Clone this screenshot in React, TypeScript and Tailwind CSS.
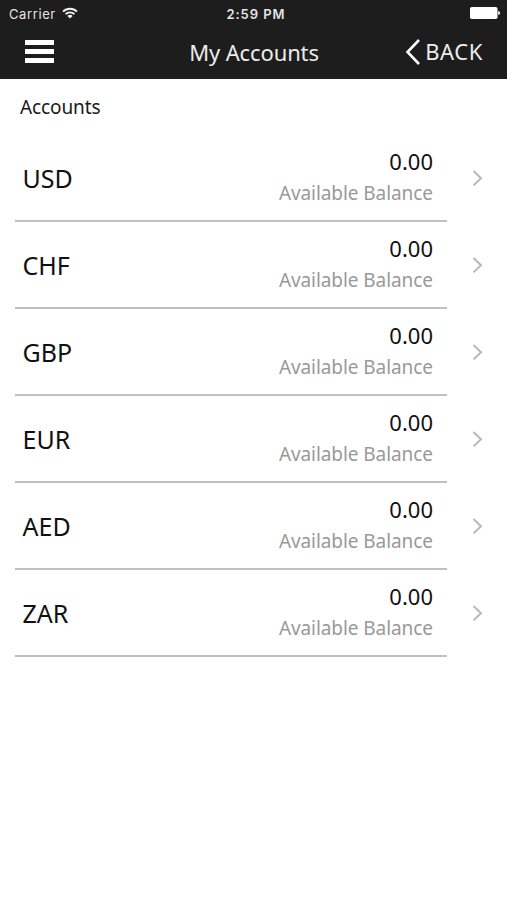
import React from "react";

const accounts = [
  { currency: "USD", balance: "0.00" },
  { currency: "CHF", balance: "0.00" },
  { currency: "GBP", balance: "0.00" },
  { currency: "EUR", balance: "0.00" },
  { currency: "AED", balance: "0.00" },
  { currency: "ZAR", balance: "0.00" },
];

const StatusBar = () => (
  <div className="grid h-[27px] grid-cols-[1fr_auto_1fr] items-center pl-[9px] pr-[7px] font-['Inter',sans-serif] text-[13px] leading-[26px] text-[#e4e4e4]">
    <div className="flex items-center gap-[6px]">
      <span className="tracking-[0.6px]">Carrier</span>
      <svg className="-mt-0.5" width="16" height="12" viewBox="0 0 16 12" fill="none" stroke="#f2f2f2" strokeWidth="1.9">
        <path d="M1 4.6C4.9 0.7 11.1 0.7 15 4.6" />
        <path d="M3.5 7.2C6 4.7 10 4.7 12.5 7.2" />
        <path d="M8 11.5L5.4 8.9C6.9 7.5 9.1 7.5 10.6 8.9Z" fill="#f2f2f2" stroke="none" />
      </svg>
    </div>
    <span className="pl-[3px] font-semibold tracking-[0.95px]">2:59 PM</span>
    <svg className="-mt-px justify-self-end" width="30" height="12" viewBox="0 0 30 12" fill="#ffffff">
      <rect x="0" y="0" width="27.5" height="12" rx="1.8" />
      <path d="M28.2 4C29.4 4.3 30 5 30 6S29.4 7.7 28.2 8Z" />
    </svg>
  </div>
);

const NavBar = () => (
  <div className="grid h-[52px] grid-cols-[1fr_auto_1fr] items-center pb-[3px] pl-[25px] pr-6 text-[22px] text-[#ececec]">
    <button className="flex w-[29px] flex-col gap-1" aria-label="Menu">
      <span className="h-[5px] bg-white" />
      <span className="h-[5px] bg-white" />
      <span className="h-[5px] bg-white" />
    </button>
    <h1 className="pt-px tracking-[-0.13px]">My Accounts</h1>
    <button className="flex items-center justify-self-end gap-1">
      <svg width="16" height="28" viewBox="0 0 16 28" fill="none" stroke="#ffffff" strokeWidth="2.6">
        <path d="M14 2L2.5 14L14 26" />
      </svg>
      <span className="tracking-[0.6px]">BACK</span>
    </button>
  </div>
);

const AccountRow = ({ currency, balance }: { currency: string; balance: string }) => (
  <li className="flex h-[87px] pl-[14.5px] pr-6">
    <div className="flex flex-1 items-center justify-between border-b-2 border-[#c0c0c0] pl-2 pr-[14px]">
      <span className="text-[25px] leading-8 text-[#111111]">{currency}</span>
      <div className="text-right">
        <p className="text-[22px] leading-[31px] text-[#111111]">{balance}</p>
        <p className="text-[19px] leading-8 tracking-[-0.07px] text-[#999999]">Available Balance</p>
      </div>
    </div>
    <svg className="ml-[25px] mt-[34px]" width="11" height="18" viewBox="0 0 11 18" fill="none" stroke="#b8b8b8" strokeWidth="2">
      <path d="M1.5 2L9 9.2L1.5 16.4" />
    </svg>
  </li>
);

const App = () => {
  return (
    <div className="min-h-screen bg-white font-['Noto_Sans',sans-serif]">
      <header className="bg-[#1d1d1d]">
        <StatusBar />
        <NavBar />
      </header>
      <h2 className="pl-5 text-[19px] leading-[57px] -mb-px tracking-[-0.12px] text-[#1a1a1a]">Accounts</h2>
      <ul>
        {accounts.map((item) => (
          <AccountRow key={item.currency} currency={item.currency} balance={item.balance} />
        ))}
      </ul>
    </div>
  );
};

export default App;
